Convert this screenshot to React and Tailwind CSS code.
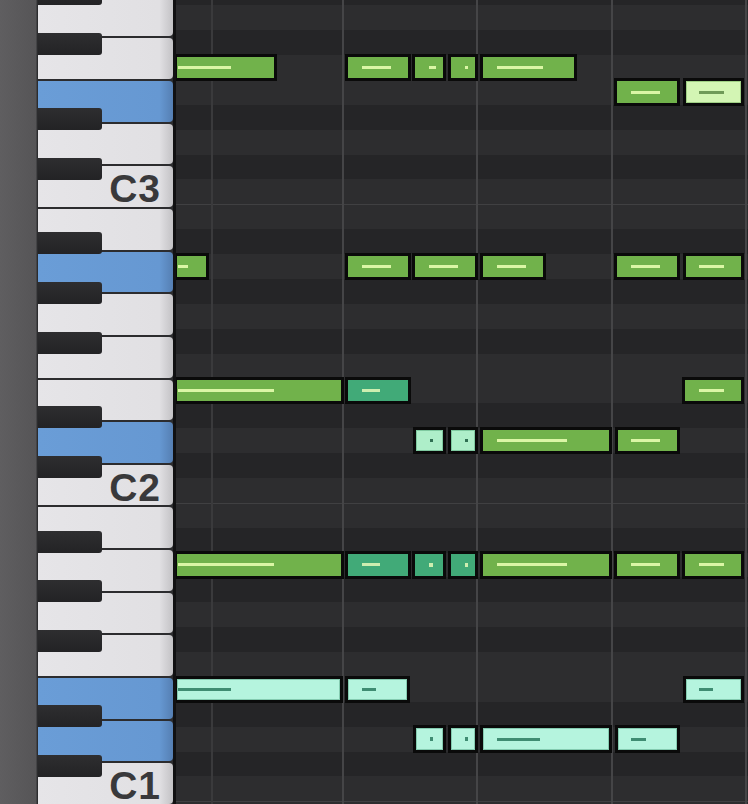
import React from "react";
import clsx from "clsx";

const ROW = 24.88; // one semitone
const TOP = 55; // y of the F3 row
const GRID_X = 176;
const rowTop = (k) => TOP + ROW * k;
const isBlack = (k) => [1, 3, 6, 8, 10].includes((((5 - k) % 12) + 12) % 12);
const isB = (k) => (((5 - k) % 12) + 12) % 12 === 11;

const whiteKeys = [
  "G3", "F3", "E3", "D3", "C3", "B2", "A2", "G2", "F2", "E2",
  "D2", "C2", "B1", "A1", "G1", "F1", "E1", "D1", "C1",
];
const blueKeys = ["E3", "A2", "D2", "E1", "D1"];

const rows = [];
for (let k = -3; k <= 30; k++) rows.push(k);
const blackRows = rows.filter(isBlack);

const barLines = [
  { x: 211, cls: "w-[1.5px] bg-[#3a3a3c]" },
  { x: 342, cls: "w-[2px] bg-[#454547]" },
  { x: 476, cls: "w-[2px] bg-[#454547]" },
  { x: 611, cls: "w-[2px] bg-[#454547]" },
  { x: 745, cls: "w-[2px] bg-[#454547]" },
];

// [row, green left, green right, kind, mark start, mark end]
const notes = [
  [0, 177.4, 273.7, "g", 178, 230.7],
  [0, 347.6, 408, "g", 362, 390.6],
  [0, 415, 443, "g", 429, 436],
  [0, 450.5, 475, "g", 464.5, 468],
  [0, 482.5, 574.4, "g", 497, 543],
  [1, 616.7, 677.4, "g", 631.4, 660],
  [1, 685.8, 741, "lg", 699.4, 724.4],

  [8, 177.4, 206, "g", 178, 187.6],
  [8, 347.6, 408, "g", 362, 390.6],
  [8, 415, 475, "g", 429, 458],
  [8, 482.5, 543, "g", 497, 525.5],
  [8, 616.7, 677.4, "g", 631.4, 660],
  [8, 685.8, 741, "g", 699.4, 724.4],

  [13, 177.4, 341, "g", 178, 273.7],
  [13, 347.6, 408, "t", 362, 379.6],
  [13, 684.7, 741, "g", 698.7, 723.6],
  [15, 416, 443, "q", 429.6, 433],
  [15, 451, 475, "q", 464.5, 468],
  [15, 482.5, 609.3, "g", 497, 567],
  [15, 617.8, 677.4, "g", 631.4, 660],

  [20, 177.4, 341, "g", 178, 273.7],
  [20, 347.6, 408, "t", 362, 379.6],
  [20, 415, 443, "t", 429, 432.5],
  [20, 450.5, 475, "t", 464.5, 468],
  [20, 482.5, 609.3, "g", 497, 567],
  [20, 616.7, 677.4, "g", 631.4, 660],
  [20, 684.7, 741, "g", 698.7, 723.6],

  [25, 177.4, 340, "m", 178, 230.7],
  [25, 348, 407, "m", 362, 376],
  [25, 685.8, 741, "m", 698.7, 713],
  [27, 416, 443, "m", 429.6, 433],
  [27, 451, 475, "m", 464.5, 468],
  [27, 482.5, 609.3, "m", 497, 539.5],
  [27, 617.8, 677.4, "m", 631.4, 646],
];

const fills = {
  g: "bg-[#71b24b]",
  lg: "bg-[#d3f5b4] shadow-[inset_0_0_0_1px_#9fcf84]",
  t: "bg-[#41aa78]",
  q: "bg-[#aeeec9] shadow-[inset_0_0_0_1px_#7fc9a0]",
  m: "bg-[#b5f4de] shadow-[inset_0_0_0_1px_#84cbb0]",
};
const marks = {
  g: "bg-[#dbf6a5]",
  lg: "bg-[#6f9a58]",
  t: "bg-[#cdeeb0]",
  q: "bg-[#2f6f52]",
  m: "bg-[#3f8c72]",
};

function Keyboard() {
  return (
    <div className="relative flex h-full w-[139px] shrink-0 bg-[#2c2c2e]">
      <div className="flex w-[136px] flex-col pl-[1px] mt-[-5.25px]">
        {whiteKeys.map((name) => (
          <div key={name} className="h-[42.65px] shrink-0 py-[1px]">
            <div
              className={clsx(
                "relative h-full rounded-r-[4px] bg-linear-to-r",
                blueKeys.includes(name)
                  ? "from-[#6a9dd7] via-[#6698d2] via-90% to-[#557fb3]"
                  : "from-[#e6e5e8] via-[#e1e0e3] via-90% to-[#c3c2c5]"
              )}
            >
              {name.startsWith("C") && (
                <span className="absolute right-[12px] bottom-[2.5px] font-['Liberation_Sans',Arial,sans-serif] text-[39px] font-bold leading-[0.8] tracking-[1px] text-[#39393b]">
                  {name}
                </span>
              )}
            </div>
          </div>
        ))}
      </div>
      <div className="w-[3px] shrink-0 bg-[#111112]" />
      {blackRows.map((k) => (
        <div
          key={k}
          className="absolute left-[1px] h-[22px] w-[64px] rounded-r-[3px] bg-linear-to-b from-[#2e2e30] to-[#232325]"
          style={{ top: rowTop(k) + 3 }}
        />
      ))}
    </div>
  );
}

function Note({ n }) {
  const [k, gl, gr, kind, a, b] = n;
  const dot = b - a < 5;
  return (
    <div
      className="absolute border-[3px] border-[#0a0a0a]"
      style={{ left: gl - 3 - GRID_X, top: rowTop(k) - 1.5, width: gr - gl + 6, height: 27.5 }}
    >
      <div className={clsx("relative h-full w-full", fills[kind])}>
        <div
          className={clsx("absolute", marks[kind], dot ? "top-[9px] h-[3.5px]" : "top-[9.25px] h-[3px]")}
          style={{ left: a - gl, width: b - a }}
        />
      </div>
    </div>
  );
}

function Grid() {
  return (
    <div className="relative h-full flex-1 overflow-hidden bg-[#2c2c2e]">
      <div className="flex flex-col mt-[-19.64px]">
        {rows.map((k) => (
          <div
            key={k}
            className={clsx(
              "h-[24.88px] shrink-0",
              isBlack(k) ? "bg-[#252527]" : "bg-[#2d2d2f]",
              isB(k) && "border-t-[1.5px] border-[#404042]"
            )}
          />
        ))}
      </div>
      {barLines.map((l) => (
        <div
          key={l.x}
          className={clsx("absolute top-0 bottom-0", l.cls)}
          style={{ left: l.x - GRID_X }}
        />
      ))}
      {notes.map((n, i) => (
        <Note key={i} n={n} />
      ))}
    </div>
  );
}

export default function App() {
  return (
    <div className="flex h-[804px] w-[748px] overflow-hidden bg-[#1c1c1e]">
      <div className="h-full w-[37px] shrink-0 border-r border-[#444446] bg-linear-to-r from-[#5f5e60] to-[#565557]" />
      <Keyboard />
      <Grid />
    </div>
  );
}
